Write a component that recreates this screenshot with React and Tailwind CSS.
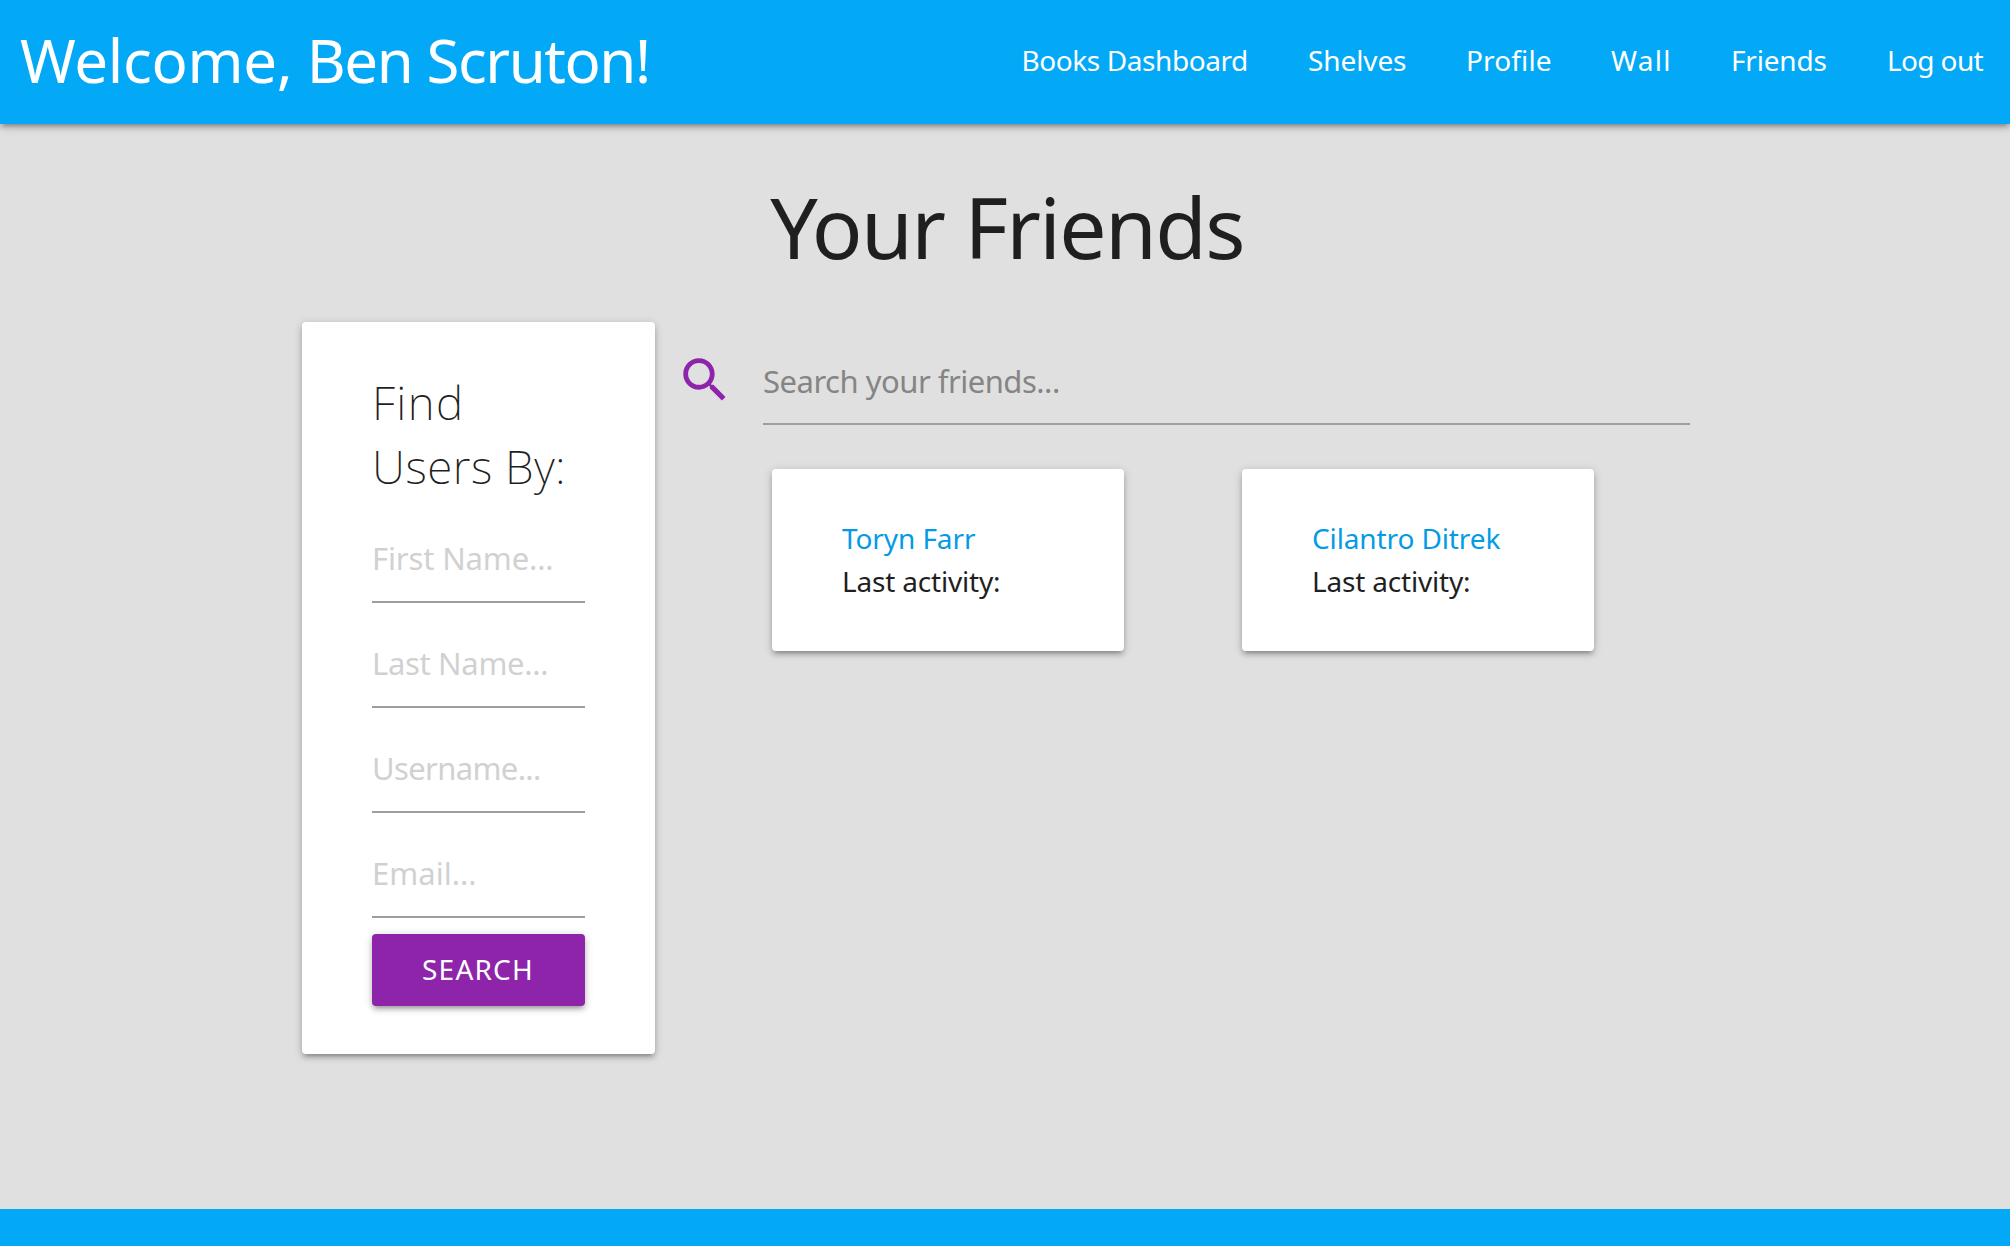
const NAV = [
  { label: "Books Dashboard", cls: "w-[286.5px] tracking-[-0.42px]" },
  { label: "Shelves", cls: "w-[158px] tracking-[-0.1px]" },
  { label: "Profile", cls: "w-[145px] tracking-[0.13px]" },
  { label: "Wall", cls: "w-[120px] tracking-[1.3px]" },
  { label: "Friends", cls: "w-[156px] tracking-[-0.2px]" },
  { label: "Log out", cls: "w-[153px] tracking-[-0.63px]" },
];

const FIELDS = [
  { label: "First Name...", cls: "tracking-[-0.14px]" },
  { label: "Last Name...", cls: "tracking-[-0.33px]" },
  { label: "Username...", cls: "tracking-[-0.64px]" },
  { label: "Email...", cls: "tracking-[0.02px]" },
];

const FRIENDS = [
  { name: "Toryn Farr", cls: "tracking-[-0.1px]" },
  { name: "Cilantro Ditrek", cls: "tracking-[-0.12px]" },
];

const SHADOW =
  "shadow-[0_4px_4px_0_rgba(0,0,0,0.14),0_6px_2px_-4px_rgba(0,0,0,0.12),0_2px_10px_0_rgba(0,0,0,0.2)]";

function Header() {
  return (
    <header className={`relative flex h-[124px] justify-between bg-[#03a9f6] text-white ${SHADOW}`}>
      <a href="#" className="pl-5 text-[60px] leading-[120px] tracking-[-1.45px] whitespace-nowrap">
        <span className="tracking-[-0.3px]">Welcome,</span> Ben Scruton!
      </a>
      <nav className="flex text-[28px] leading-[120px] whitespace-nowrap">
        {NAV.map((item) => (
          <a key={item.label} href="#" className={`pl-[30px] ${item.cls}`}>
            {item.label}
          </a>
        ))}
      </nav>
    </header>
  );
}

function FindUsers() {
  return (
    <aside className={`ml-[302px] h-[732px] w-[353px] shrink-0 rounded-[4px] bg-white px-[70px] pt-[47px] ${SHADOW}`}>
      <h2 className="h-[129px] pt-px text-[46px] leading-[64.4px] font-extralight">
        <span className="block tracking-[1.47px]">Find</span>
        <span className="block tracking-[0.5px] whitespace-nowrap">Users By:</span>
      </h2>
      {FIELDS.map((f) => (
        <input
          key={f.label}
          type="text"
          placeholder={f.label}
          className={`block h-[105px] w-full border-b-2 border-[#9e9e9e] pt-4 text-[31px] placeholder:text-[#d1d1d1] ${f.cls}`}
        />
      ))}
      <button
        className={`mt-4 block h-[72px] w-full rounded-[4px] bg-[#8e24aa] pr-px pb-px text-center text-[28px] leading-[69px] tracking-[1.2px] text-white ${SHADOW}`}
      >
        SEARCH
      </button>
    </aside>
  );
}

function FriendCard({ name, cls }) {
  return (
    <div className={`h-[182px] w-[352px] rounded-[4px] bg-white px-[70px] pt-12 text-[28px] leading-[43px] ${SHADOW}`}>
      <a href="#" className={`block text-[#039be5] ${cls}`}>
        {name}
      </a>
      <p className="tracking-[-0.19px]">Last activity:</p>
    </div>
  );
}

export default function App() {
  return (
    <div className="flex h-[1246px] w-full flex-col overflow-hidden bg-[#e0e0e0] font-['Noto_Sans',sans-serif] text-[#1f1f1f]">
      <Header />
      <main className="flex-1">
        <h1 className="mt-[57px] pl-1 text-center text-[84px] leading-[92px] tracking-[-1.68px]">Your Friends</h1>
        <div className="mt-[49px] flex items-start">
          <FindUsers />
          <section>
            <div className="mt-[14px] flex">
              <svg viewBox="0 0 24 24" className="mt-[15px] ml-[21px] size-[58px] fill-[#8e24aa]">
                <path d="M15.5 14h-.79l-.28-.27C15.41 12.59 16 11.11 16 9.5 16 5.91 13.09 3 9.5 3S3 5.91 3 9.5 5.91 16 9.5 16c1.61 0 3.09-.59 4.23-1.57l.27.28v.79l5 4.99L20.49 19l-4.99-5zm-6 0C7.01 14 5 11.99 5 9.5S7.01 5 9.5 5 14 7.01 14 9.5 11.99 14 9.5 14z" />
              </svg>
              <input
                type="text"
                placeholder="Search your friends..."
                className="ml-[29px] h-[89px] w-[927px] border-b-2 border-[#9e9e9e] pt-0.5 text-[31px] tracking-[-0.5px] placeholder:text-[#858585]"
              />
            </div>
            <div className="mt-[44px] ml-[117px] flex gap-[118px]">
              {FRIENDS.map((f) => (
                <FriendCard key={f.name} {...f} />
              ))}
            </div>
          </section>
        </div>
      </main>
      <footer className="h-[37px] bg-[#03a9f6]" />
    </div>
  );
}
